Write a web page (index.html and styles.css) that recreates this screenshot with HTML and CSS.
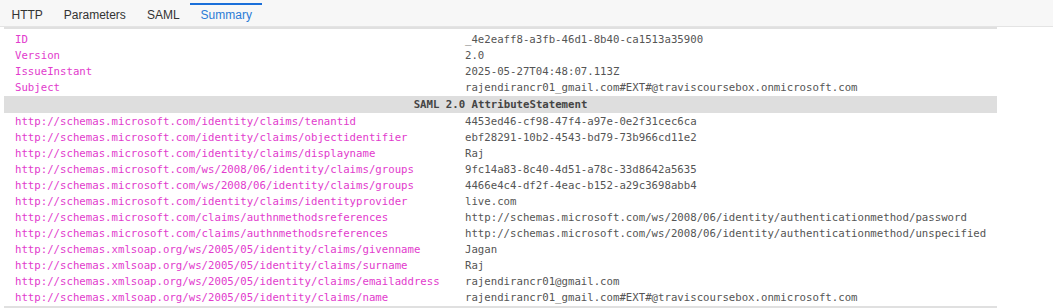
FILE: index.html
```html
<!DOCTYPE html>
<html lang="en">
<head>
    <meta charset="UTF-8">
    <title>SAML Summary</title>
    <link rel="stylesheet" href="styles.css">
</head>
<body>
    <div class="tabs">
        <div class="tab">HTTP</div>
        <div class="tab">Parameters</div>
        <div class="tab">SAML</div>
        <div class="tab active">Summary</div>
    </div>

    <div class="summary">
        <table class="samlTable">
            <tr><td class="key">ID</td><td class="val">_4e2eaff8-a3fb-46d1-8b40-ca1513a35900</td></tr>
            <tr><td class="key">Version</td><td class="val">2.0</td></tr>
            <tr><td class="key">IssueInstant</td><td class="val">2025-05-27T04:48:07.113Z</td></tr>
            <tr><td class="key">Subject</td><td class="val">rajendirancr01_gmail.com#EXT#@traviscoursebox.onmicrosoft.com</td></tr>
            <tr class="section"><td colspan="2">SAML 2.0 AttributeStatement</td></tr>
            <tr><td class="key">http://schemas.microsoft.com/identity/claims/tenantid</td><td class="val">4453ed46-cf98-47f4-a97e-0e2f31cec6ca</td></tr>
            <tr><td class="key">http://schemas.microsoft.com/identity/claims/objectidentifier</td><td class="val">ebf28291-10b2-4543-bd79-73b966cd11e2</td></tr>
            <tr><td class="key">http://schemas.microsoft.com/identity/claims/displayname</td><td class="val">Raj</td></tr>
            <tr><td class="key">http://schemas.microsoft.com/ws/2008/06/identity/claims/groups</td><td class="val">9fc14a83-8c40-4d51-a78c-33d8642a5635</td></tr>
            <tr><td class="key">http://schemas.microsoft.com/ws/2008/06/identity/claims/groups</td><td class="val">4466e4c4-df2f-4eac-b152-a29c3698abb4</td></tr>
            <tr><td class="key">http://schemas.microsoft.com/identity/claims/identityprovider</td><td class="val">live.com</td></tr>
            <tr><td class="key">http://schemas.microsoft.com/claims/authnmethodsreferences</td><td class="val">http://schemas.microsoft.com/ws/2008/06/identity/authenticationmethod/password</td></tr>
            <tr><td class="key">http://schemas.microsoft.com/claims/authnmethodsreferences</td><td class="val">http://schemas.microsoft.com/ws/2008/06/identity/authenticationmethod/unspecified</td></tr>
            <tr><td class="key">http://schemas.xmlsoap.org/ws/2005/05/identity/claims/givenname</td><td class="val">Jagan</td></tr>
            <tr><td class="key">http://schemas.xmlsoap.org/ws/2005/05/identity/claims/surname</td><td class="val">Raj</td></tr>
            <tr><td class="key">http://schemas.xmlsoap.org/ws/2005/05/identity/claims/emailaddress</td><td class="val">rajendirancr01@gmail.com</td></tr>
            <tr><td class="key">http://schemas.xmlsoap.org/ws/2005/05/identity/claims/name</td><td class="val">rajendirancr01_gmail.com#EXT#@traviscoursebox.onmicrosoft.com</td></tr>
        </table>
    </div>
</body>
</html>
```

FILE: styles.css
```css
body {
    margin: 0;
    background: #fff;
    font-family: "Liberation Sans", Arial, sans-serif;
}

/* tab strip */
.tabs {
    display: flex;
    height: 27px;
    background: #f7f7f7;
    border-bottom: 1px solid #e4e4e4;
    box-sizing: border-box;
    padding-left: 1px;
}
.tab {
    margin-top: 3px;
    padding: 0 10.5px;
    border-top: 2px solid transparent;
    font-size: 12px;
    line-height: 21px;
    color: #333;
}
.tab.active {
    border-top-color: #1a6fd9;
    color: #2b7bd6;
}

/* summary table */
.summary {
    padding: 0 0 0 4px;
}
.samlTable {
    width: 993px;
    border-collapse: collapse;
    border-top: 2px solid #e0e0e0;
    border-bottom: 2px solid #e0e0e0;
    font-family: "DejaVu Sans Mono", monospace;
    font-size: 10.7px;
}
.samlTable td {
    padding: 0 0 0 11px;
    height: 16px;
    line-height: 16px;
    white-space: nowrap;
}
.samlTable tr:first-child td {
    padding-top: 3px;
}
.key {
    width: 439px;
    color: #e23bcd;
}
.val {
    color: #555;
}
.section td {
    background: #dedede;
    color: #444;
    font-weight: bold;
    text-align: center;
    padding: 0;
    height: 17px;
    border-bottom: 1px solid #fff;
}
```
